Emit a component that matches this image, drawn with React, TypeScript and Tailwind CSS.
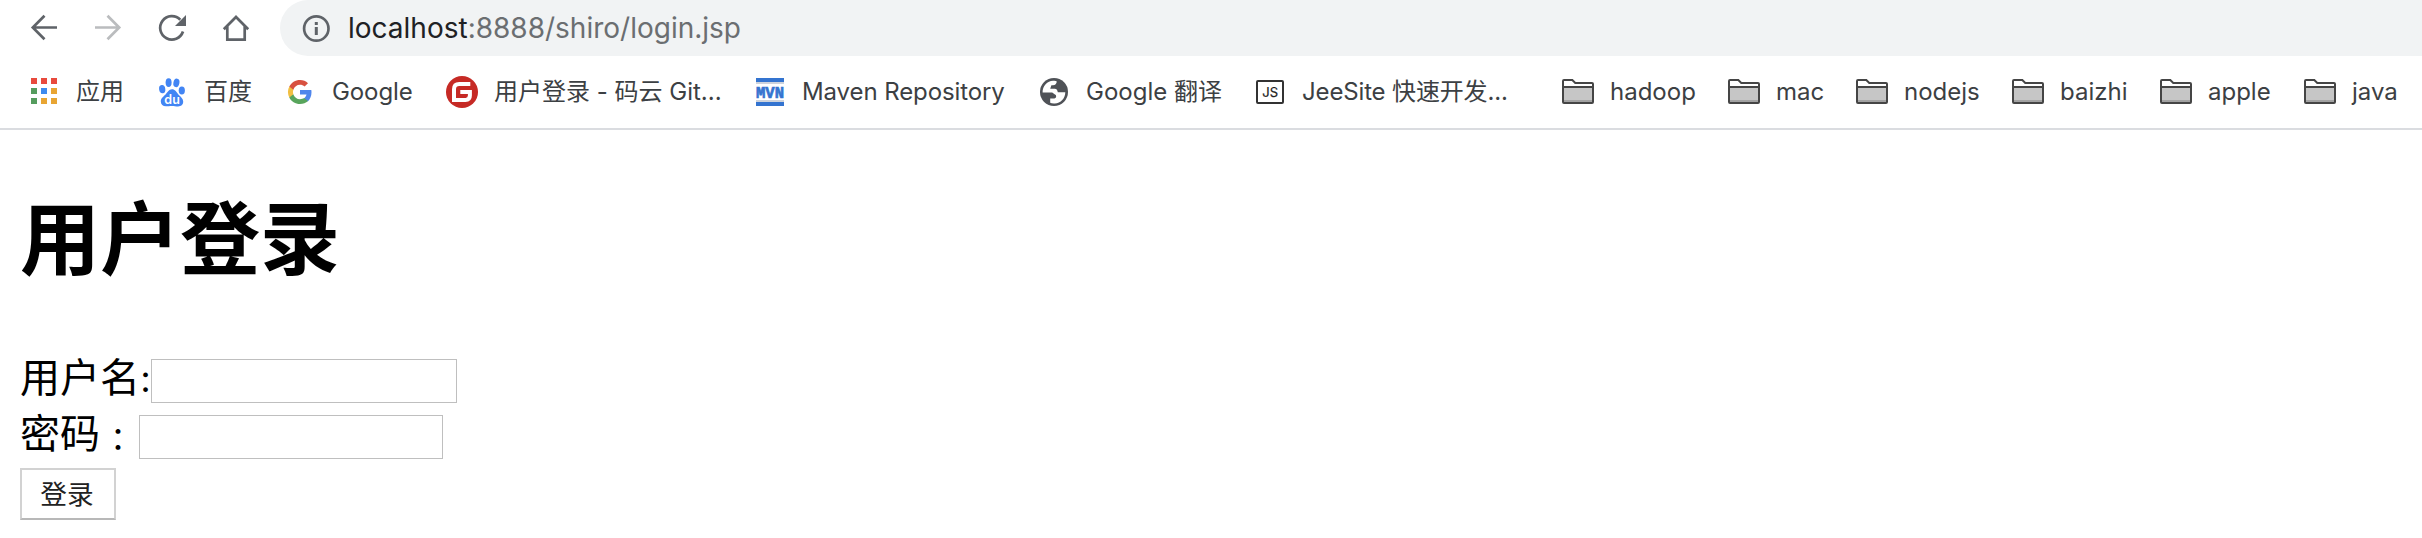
import React from "react";

type Bookmark = { label: string; icon: React.ReactNode; width: string; text: string };

const svg = "block h-8 w-8 shrink-0";

const AppsIcon = () => (
  <svg viewBox="0 0 32 32" className={svg} shapeRendering="crispEdges">
    {["#e84a3d", "#e84a3d", "#e84a3d", "#559c5e", "#3e8bee", "#e8a533", "#559c5e", "#e8a533", "#e8a533"].map((c, i) => (
      <rect key={i} x={3 + (i % 3) * 10} y={2 + Math.floor(i / 3) * 10} width="6" height="6" fill={c} />
    ))}
  </svg>
);

const BaiduIcon = () => (
  <svg viewBox="0 0 32 32" className={svg} fill="#4285f4">
    <ellipse cx="6.2" cy="13.1" rx="3.1" ry="4.2" transform="rotate(-8 6.2 13.1)" />
    <ellipse cx="12.6" cy="6.6" rx="3" ry="4.4" />
    <ellipse cx="20.4" cy="6.9" rx="3" ry="4.3" transform="rotate(12 20.4 6.9)" />
    <ellipse cx="25.8" cy="14.4" rx="3.1" ry="4" />
    <path d="M16 13.300c3.100 0 4.200 2.500 6 4.600 2.100 2.400 5.200 4.300 5.200 7.600 0 3.300-2.200 4.900-5.100 4.900-2.200 0-4-.5-6.300-.5-2.200 0-3.600.3-5.900.3-3 0-5.100-1.600-5.100-4.700 0-3.400 2.800-5.100 5-7.300 1.900-2 3.100-4.900 6.200-4.900z" />
    <text x="16.100" y="27.500" textAnchor="middle" fill="#fff" fontSize="12.500" fontWeight="600" fontFamily="Inter, sans-serif">du</text>
  </svg>
);

const GoogleIcon = () => (
  <svg viewBox="0 0 32 32" className={svg}>
    <g transform="translate(4 4)">
      <path fill="#4f86ec" d="M23.500 12.300c0-.9-.1-1.600-.2-2.300H12v4.600h6.500c-.3 1.500-1.100 2.800-2.400 3.600v3h3.900c2.200-2.100 3.500-5.200 3.500-8.900z" />
      <path fill="#58a55c" d="M12 24c3.200 0 6-1.100 8-2.900l-3.900-3c-1.100.7-2.500 1.200-4.100 1.200-3.100 0-5.800-2.100-6.700-5h-4v3.100C3.300 21.300 7.300 24 12 24z" />
      <path fill="#f1bf42" d="M5.300 14.300c-.5-1.500-.5-3.100 0-4.600V6.600h-4a12 12 0 0 0 0 10.800z" />
      <path fill="#d85140" d="M12 4.800c1.800 0 3.300.6 4.600 1.800L20 3.200C17.900 1.200 15.200 0 12 0 7.300 0 3.300 2.700 1.300 6.600l4 3.100c.9-2.800 3.600-4.900 6.700-4.900z" />
    </g>
  </svg>
);

const GiteeIcon = () => (
  <svg viewBox="0 0 32 32" className={svg}>
    <circle cx="16" cy="16" r="16" fill="#c62a25" />
    <path d="M24.300 8H13.300Q8 8 8 13.300V24H19.500Q23.900 24 23.900 19.600V15.900H14.300" fill="none" stroke="#fff" strokeWidth="4" />
    <path d="M14.300 20h5.500" stroke="#c62a25" strokeWidth="3.800" />
  </svg>
);

const MavenIcon = () => (
  <svg viewBox="0 0 32 32" className={svg}>
    <path d="M2 2h28v4H2zM2 26h28v4H2z" fill="#3474d0" />
    <path d="M2 6h28v2H2zM2 24h28v2H2z" fill="#ced3dc" />
    <text x="2" y="21.800" textLength="28" lengthAdjust="spacingAndGlyphs" fill="#3474d0" stroke="#3474d0" strokeWidth=".7" fontSize="16.500" fontWeight="700" fontFamily="Liberation Mono, monospace">MVN</text>
  </svg>
);

const GlobeIcon = () => (
  <svg viewBox="0 0 32 32" className={svg}>
    <circle cx="16" cy="16" r="14" fill="#4f5257" />
    <path
      d="M4.600 16.600C4.300 10 9.500 5 15 4.800q3-.3 3.800.8-.4 3.700-3.800 3.700h-1.600l-1.200 3.500h4.600q2.400 0 3 3.400h7.500c0 6-4.600 11-10.500 11.200-2 .1-3.600-.1-4.600-.7v-4.200h4.200q1.800-.3 1.800-2.200 0-1.700-1.600-2l-2.400-1.700z"
      fill="#fff"
    />
  </svg>
);

const JeeIcon = () => (
  <svg viewBox="0 0 32 32" className={svg}>
    <rect x="3" y="5" width="26" height="22" rx="1" fill="none" stroke="#333" strokeWidth="2" />
    <text x="16.200" y="20.600" textAnchor="middle" fill="#222" stroke="#222" strokeWidth=".2" fontSize="13" fontFamily="Inter, sans-serif">JS</text>
  </svg>
);

const FolderIcon = () => (
  <svg viewBox="0 0 32 32" className={svg}>
    <path d="M1 11h30v15H1z" fill="#c6c6c6" />
    <path d="M2 24h28v2H2z" fill="#a2a2a2" />
    <path d="M1 11V5q0-1 1-1h8.300l3 3H30q1 0 1 1V26q0 1-1 1H2q-1 0-1-1V11h30" fill="none" stroke="#454545" strokeWidth="2" />
  </svg>
);

const bookmarks: Bookmark[] = [
  { label: "应用", icon: <AppsIcon />, width: "w-32", text: "" },
  { label: "百度", icon: <BaiduIcon />, width: "w-32", text: "" },
  { label: "Google", icon: <GoogleIcon />, width: "w-[162px]", text: "tracking-[-0.1px]" },
  { label: "用户登录 - 码云 Git...", icon: <GiteeIcon />, width: "w-[308px]", text: "" },
  { label: "Maven Repository", icon: <MavenIcon />, width: "w-[284px]", text: "tracking-[-0.1px]" },
  { label: "Google 翻译", icon: <GlobeIcon />, width: "w-[216px]", text: "" },
  { label: "JeeSite 快速开发...", icon: <JeeIcon />, width: "w-[308px]", text: "tracking-[-0.15px]" },
  { label: "hadoop", icon: <FolderIcon />, width: "w-[166px]", text: "" },
  { label: "mac", icon: <FolderIcon />, width: "w-32", text: "" },
  { label: "nodejs", icon: <FolderIcon />, width: "w-[156px]", text: "" },
  { label: "baizhi", icon: <FolderIcon />, width: "w-[148px]", text: "" },
  { label: "apple", icon: <FolderIcon />, width: "w-36", text: "" },
  { label: "java", icon: <FolderIcon />, width: "w-[118px]", text: "" },
];

const Toolbar = () => (
  <div className="flex h-14 items-center pl-7">
    <div className="flex w-[252px] gap-8 text-[#5f6368]">
      <svg viewBox="0 0 32 32" className={svg} fill="none" stroke="currentColor" strokeWidth="2.700">
        <path d="M29 15.500H5M16.500 3.800L4.800 15.500l11.700 11.700" />
      </svg>
      <svg viewBox="0 0 32 32" className="block h-8 w-8 shrink-0 text-[#babcbe]" fill="none" stroke="currentColor" strokeWidth="2.700">
        <path d="M3 15.500h24M15.500 3.800l11.700 11.700-11.700 11.700" />
      </svg>
      <svg viewBox="0 0 32 32" className={svg} fill="none" stroke="currentColor" strokeWidth="2.700">
        <path d="M27 19.500A11.700 11.700 0 1 1 24.300 7.700" />
        <path d="M30 3v11H19z" fill="currentColor" stroke="none" />
      </svg>
      <svg viewBox="0 0 32 32" className={svg} fill="none" stroke="currentColor" strokeWidth="2.700">
        <path d="M3.800 17.300L16 5l12.200 12.300M7.300 14v13.600h17.400V14" />
      </svg>
    </div>
    <div className="flex h-14 grow items-center rounded-l-full bg-[#f1f3f4] pl-5">
      <svg viewBox="0 0 32 32" className={svg} fill="none" stroke="#5f6368" strokeWidth="2.700">
        <circle cx="16.300" cy="16.500" r="12.200" />
        <path d="M16.300 15v8M16.300 10v3" strokeWidth="3" />
      </svg>
      <span className="ml-4 whitespace-nowrap text-[28px] leading-none text-[#202124]">
        localhost<span className="text-[#6b6e71]">:8888/shiro/login.jsp</span>
      </span>
    </div>
  </div>
);

export default function App() {
  return (
    <div className="h-[538px] w-[2422px] overflow-hidden bg-white">
      <header className="h-[130px] border-b-2 border-[#dadce0] font-['Inter','Noto_Sans_CJK_SC',sans-serif]">
        <Toolbar />
        <nav className="flex h-[72px] items-center pl-7">
          {bookmarks.map((b) => (
            <div key={b.label} className={`flex shrink-0 items-center gap-4 ${b.width}`}>
              {b.icon}
              <span className={`whitespace-nowrap text-[24px] leading-8 text-[#3c4043] ${b.text}`}>{b.label}</span>
            </div>
          ))}
        </nav>
      </header>
      <main className="pl-5 pt-[55px] font-['Liberation_Serif','Noto_Sans_CJK_SC',serif] text-black">
        <h1 className="text-[80px] font-bold leading-[112px]">用户登录</h1>
        <form className="mt-[54px] text-[40px]" onSubmit={(e) => e.preventDefault()}>
          <div className="flex h-14 items-start">
            <label htmlFor="username" className="w-[131px] whitespace-nowrap leading-[56px]">用户名:</label>
            <input id="username" className="mt-2 h-11 w-[306px] border border-[#bfbfbf] px-1 text-[26px] outline-none" />
          </div>
          <div className="flex h-14 items-start">
            <label htmlFor="password" className="flex w-[119px] whitespace-nowrap leading-[56px]">
              密码<span className="pl-2.5 pt-[3px] text-[32px]">：</span>
            </label>
            <input id="password" type="password" className="mt-2 h-11 w-[304px] border border-[#bfbfbf] px-1 text-[26px] outline-none" />
          </div>
          <button className="mt-[5px] flex h-[52px] w-24 items-center justify-center border-2 border-[#d2d2d2] border-b-[#b8b8b8] bg-white pr-0.5 pt-0.5 text-[26.67px] leading-none text-[#222]">
            登录
          </button>
        </form>
      </main>
    </div>
  );
}
